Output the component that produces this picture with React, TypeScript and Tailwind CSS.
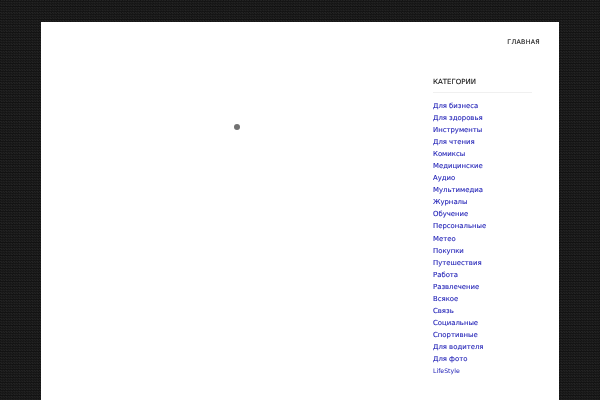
const categories = [
  'Для бизнеса',
  'Для здоровья',
  'Инструменты',
  'Для чтения',
  'Комиксы',
  'Медицинские',
  'Аудио',
  'Мультимедиа',
  'Журналы',
  'Обучение',
  'Персональные',
  'Метео',
  'Покупки',
  'Путешествия',
  'Работа',
  'Развлечение',
  'Всякое',
  'Связь',
  'Социальные',
  'Спортивные',
  'Для водителя',
  'Для фото',
];

export default function App() {
  return (
    <div className="h-[400px] w-[600px] overflow-hidden bg-[#1a1a1a] bg-[repeating-conic-gradient(#242424_0_25%,#121212_0_50%)] bg-size-[2.6px_2.6px] pt-[22px] pl-[41px] font-['DejaVu_Sans',sans-serif]">
      <div className="h-[378px] w-[518px] bg-white [text-rendering:geometricPrecision]">
        <nav className="flex justify-end pt-[15px] pr-[19px]">
          <a className="text-[6.3px] leading-[12px] tracking-[0.3px] text-[#111] transform-gpu [-webkit-text-stroke:0.1px]">ГЛАВНАЯ</a>
        </nav>
        <div className="flex">
          <main className="flex-1 pt-[75px] pl-[193px]">
            <div className="h-[6px] w-[6px] rounded-full bg-[#727272]" />
          </main>
          <aside className="mr-[27px] w-[99px] pt-[26.5px]">
            <h3 className="border-b border-[#f0f0f0] pb-[4.5px] text-[7px] leading-[12px] text-[#111] transform-gpu [-webkit-text-stroke:0.1px]">КАТЕГОРИИ</h3>
            <ul className="mt-[7px] text-[6.9px] leading-[12.05px] text-[#1a1ab4] transform-gpu [-webkit-text-stroke:0.1px]">
              {categories.map((c) => (
                <li key={c}>{c}</li>
              ))}
              <li className="text-[6.2px] pt-[0.5px] [-webkit-text-stroke:0px]">LifeStyle</li>
            </ul>
          </aside>
        </div>
      </div>
    </div>
  );
}
